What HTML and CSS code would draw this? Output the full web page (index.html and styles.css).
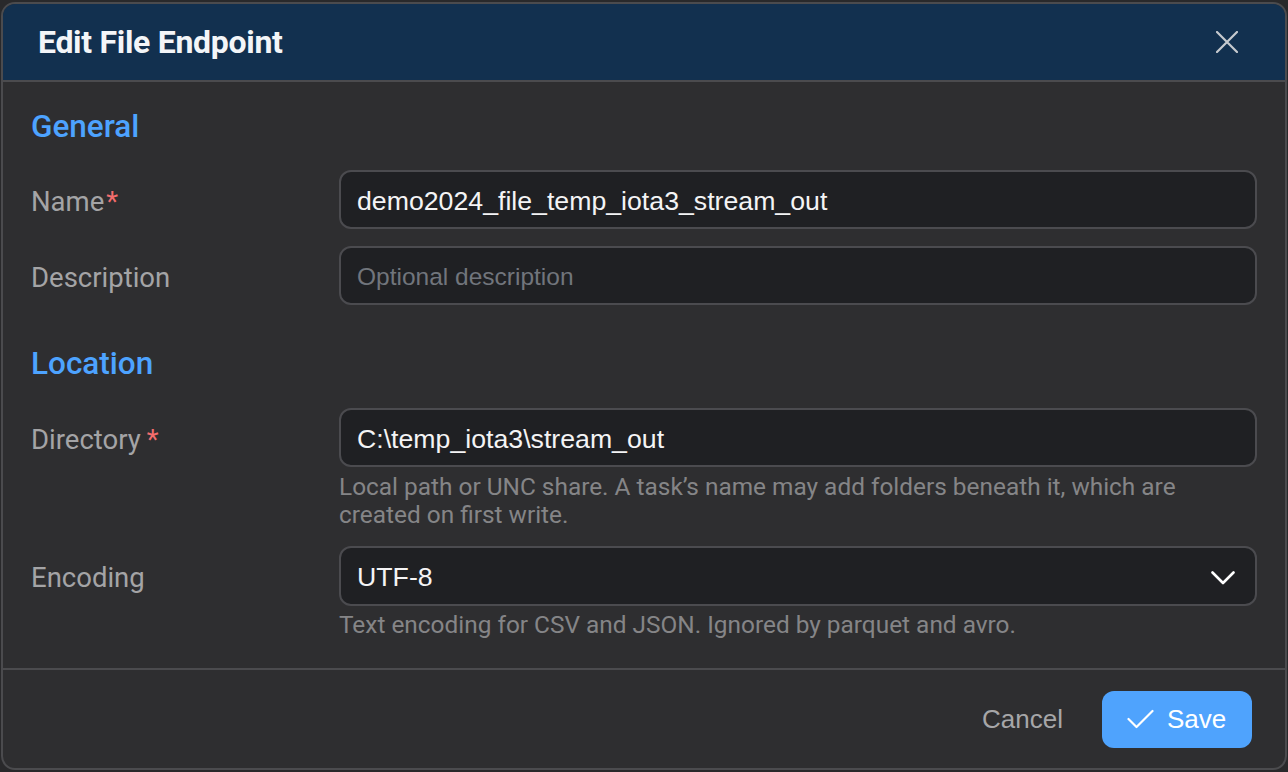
FILE: index.html
```html
<!DOCTYPE html>
<html lang="en">
<head>
<meta charset="utf-8">
<title>Edit File Endpoint</title>
<link rel="stylesheet" href="styles.css">
</head>
<body>
<div class="dialog">
  <header class="header">
    <h1 class="title">Edit File Endpoint</h1>
    <button class="close" aria-label="Close">
      <svg width="22" height="22" viewBox="0 0 22 22"><path d="M1 1L21 21M21 1L1 21" stroke="#c6cacf" stroke-width="2.2" stroke-linecap="round" fill="none"/></svg>
    </button>
  </header>
  <main class="content">
    <section class="section">
      <h2 class="section-title">General</h2>
      <div class="fields">
        <label class="label">Name<span class="req">*</span></label>
        <div class="field"><div class="input">demo2024_file_temp_iota3_stream_out</div></div>
        <label class="label">Description</label>
        <div class="field"><div class="input placeholder">Optional description</div></div>
      </div>
    </section>
    <section class="section section-next">
      <h2 class="section-title section-title-next">Location</h2>
      <div class="fields">
        <label class="label">Directory<span class="req req-wide">*</span></label>
        <div class="field">
          <div class="input">C:\temp_iota3\stream_out</div>
          <p class="help">Local path or UNC share. A task’s name may add folders beneath it, which are created on first write.</p>
        </div>
        <label class="label label-select">Encoding</label>
        <div class="field">
          <div class="input select">
            <span>UTF-8</span>
            <svg width="24" height="14" viewBox="0 0 24 14"><path d="M1.5 1.5L12 12L22.5 1.5" stroke="#ffffff" stroke-width="2.6" stroke-linecap="round" stroke-linejoin="round" fill="none"/></svg>
          </div>
          <p class="help help-tight">Text encoding for CSV and JSON. Ignored by parquet and avro.</p>
        </div>
      </div>
    </section>
  </main>
  <footer class="footer">
    <button class="btn-cancel">Cancel</button>
    <button class="btn-save">
      <svg width="27" height="20" viewBox="0 0 27 20"><path d="M1.5 10L9.5 18L25.5 2" stroke="#ffffff" stroke-width="2.2" stroke-linecap="round" stroke-linejoin="round" fill="none"/></svg>
      <span>Save</span>
    </button>
  </footer>
</div>
</body>
</html>
```
FILE: styles.css
```css
* { box-sizing: border-box; }

html, body {
  margin: 0;
  padding: 0;
  background: #29292b;
}

body {
  font-family: Roboto, "Liberation Sans", Arial, sans-serif;
  padding: 2px 1px;
}

.dialog {
  height: 768px;
  border: 2px solid #4b4b4e;
  border-radius: 14px;
  background: #2e2e30;
  overflow: hidden;
  display: flex;
  flex-direction: column;
}

.header {
  height: 78px;
  flex: none;
  background: #12304f;
  border-bottom: 2px solid #4b4b4e;
  display: flex;
  align-items: center;
  justify-content: space-between;
  padding: 0 47px 0 35px;
}

.title {
  margin: 0;
  font-family: Roboto, sans-serif;
  font-weight: 700;
  font-size: 32px;
  letter-spacing: -0.3px;
  color: #f3f5f8;
  line-height: 40px;
}

.close {
  background: none;
  border: 0;
  padding: 0;
  width: 22px;
  height: 22px;
  display: flex;
  cursor: pointer;
}

.content {
  flex: 1;
  padding: 25px 28px 0 28px;
}

.section-next { margin-top: 39px; }

.section-title {
  margin: 0 0 23px;
  font-family: Roboto, sans-serif;
  font-weight: 500;
  font-size: 31.5px;
  line-height: 40px;
  color: #4da3ff;
}

.section-title-next { margin-bottom: 24px; }

.fields {
  display: grid;
  grid-template-columns: 308px 1fr;
  row-gap: 17px;
  align-items: start;
}

.label {
  font-family: Roboto, sans-serif;
  font-size: 27.5px;
  color: #a4a4a6;
  height: 59px;
  padding-top: 3px;
  display: flex;
  align-items: center;
}

.label-select { height: 60px; }

.req {
  color: #f46d6d;
  margin-left: 2px;
}

.req-wide { margin-left: 6px; }

.input {
  height: 59px;
  border: 2px solid #4b4b4f;
  border-radius: 12px;
  background: #1f2023;
  color: #f4f4f5;
  font-family: "Liberation Sans", Arial, sans-serif;
  font-size: 26.7px;
  display: flex;
  align-items: center;
  padding: 3px 20px 0 16px;
}

.placeholder {
  color: #71757c;
  font-size: 24.5px;
  padding-left: 16px;
}

.select {
  height: 60px;
  justify-content: space-between;
}

.help {
  margin: 6px 0 0;
  font-family: Roboto, sans-serif;
  font-size: 24.4px;
  line-height: 28px;
  color: #858587;
}

.help-tight { margin-top: 5px; }

.footer {
  flex: none;
  height: 100px;
  border-top: 2px solid #4b4b4e;
  display: flex;
  align-items: center;
  justify-content: flex-end;
  padding: 0 33px 0 0;
}

.btn-cancel {
  background: none;
  border: 0;
  padding: 0;
  margin-right: 39px;
  font-family: "Liberation Sans", Arial, sans-serif;
  font-size: 26px;
  color: #a6a6a8;
  cursor: pointer;
}

.btn-save {
  width: 150px;
  height: 57px;
  border: 0;
  border-radius: 12px;
  background: #4fa3fd;
  color: #ffffff;
  font-family: "Liberation Sans", Arial, sans-serif;
  font-size: 26px;
  display: flex;
  align-items: center;
  gap: 13px;
  padding: 0 0 0 25px;
  cursor: pointer;
}

.btn-save svg { flex: none; }
```
